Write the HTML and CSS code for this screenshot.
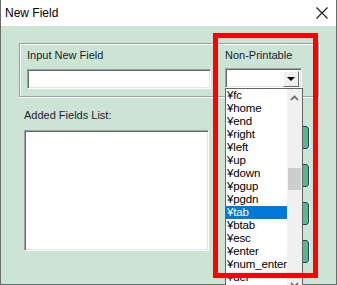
FILE: index.html
```html
<!DOCTYPE html>
<html lang="en">
<head>
    <meta charset="UTF-8">
    <meta name="viewport" content="width=device-width, initial-scale=1.0">
    <title>New Field</title>
    <link rel="stylesheet" href="styles.css">
</head>
<body>
    <div class="window">
        <div class="titlebar">
            <span class="title">New Field</span>
            <svg class="close" width="12" height="12" viewBox="0 0 12 12">
                <path d="M0.5 0.5 L11.5 11.5 M11.5 0.5 L0.5 11.5" stroke="#1a1a1a" stroke-width="1.1" fill="none"/>
            </svg>
        </div>

        <div class="client">
            <div class="group">
                <div class="col-input">
                    <div class="label">Input New Field</div>
                    <div class="textbox"></div>
                </div>
                <div class="col-combo">
                    <div class="label">Non-Printable</div>
                    <div class="combo">
                        <span class="combo-btn"><span class="arrow"></span></span>
                        <div class="dropdown">
                            <ul class="items">
                                <li>¥fc</li>
                                <li>¥home</li>
                                <li>¥end</li>
                                <li>¥right</li>
                                <li>¥left</li>
                                <li>¥up</li>
                                <li>¥down</li>
                                <li>¥pgup</li>
                                <li>¥pgdn</li>
                                <li class="selected">¥tab</li>
                                <li>¥btab</li>
                                <li>¥esc</li>
                                <li>¥enter</li>
                                <li>¥num_enter</li>
                                <li>¥del</li>
                            </ul>
                            <div class="scrollbar">
                                <span class="scroll-btn">
                                    <svg width="9" height="6" viewBox="0 0 9 6"><polyline points="1,5 4.5,1.5 8,5" stroke="#606060" stroke-width="1.6" fill="none"/></svg>
                                </span>
                                <span class="thumb"></span>
                                <span class="scroll-btn down">
                                    <svg width="9" height="6" viewBox="0 0 9 6"><polyline points="1,1 4.5,4.5 8,1" stroke="#606060" stroke-width="1.6" fill="none"/></svg>
                                </span>
                            </div>
                        </div>
                    </div>
                </div>
            </div>

            <div class="lower">
                <div class="list-col">
                    <div class="label">Added Fields List:</div>
                    <div class="listbox"></div>
                </div>
                <div class="buttons">
                    <button class="action"></button>
                    <button class="action"></button>
                    <button class="action"></button>
                    <button class="action"></button>
                </div>
            </div>
        </div>

        <div class="mark"></div>
    </div>
</body>
</html>
```

FILE: styles.css
```css
html {
    overflow: hidden;
}

body {
    margin: 0;
    font-family: "Liberation Sans", Arial, sans-serif;
    color: #000;
}

.window {
    position: relative;
    width: 337px;
    height: 285px;
    box-sizing: border-box;
    border: 1px solid #6b6b6b;
    border-top: none;
    background-color: #cce4d4;
}

.titlebar {
    height: 26px;
    background-color: #fff;
    display: flex;
    align-items: center;
    justify-content: space-between;
    padding: 0 8px 0 4px;
}

.title {
    font-size: 12px;
    color: #000;
}

.close {
    display: block;
}

.label {
    font-size: 11px;
    line-height: 13px;
    color: #1b1b2e;
    white-space: nowrap;
}

/* etched group box */
.group {
    margin: 17px 17px 0 18px;
    height: 54px;
    box-sizing: border-box;
    border: 1px solid #a0a0a0;
    box-shadow: inset 1px 1px #fff, 1px 1px #fff;
    padding: 5px 0 0 7px;
    display: flex;
    gap: 14px;
}

.col-input {
    width: 184px;
}

.textbox {
    margin-top: 7px;
    height: 20px;
    box-sizing: border-box;
    background-color: #fff;
    border: 1px solid;
    border-color: #a0a0a0 #fff #fff #a0a0a0;
    box-shadow: inset 1px 1px #696969, inset -1px -1px #e3e3e3;
}

.col-combo {
    width: 78px;
}

.combo {
    position: relative;
    margin-top: 6px;
    width: 77px;
    height: 20px;
    box-sizing: border-box;
    background-color: #fff;
    border: 1px solid;
    border-color: #a0a0a0 #fff #fff #a0a0a0;
    box-shadow: inset 1px 1px #696969, inset -1px -1px #e3e3e3;
    display: flex;
    justify-content: flex-end;
    padding: 2px 2px 2px 0;
}

.combo-btn {
    width: 16px;
    height: 16px;
    box-sizing: border-box;
    background-color: #f0f0f0;
    border: 1px solid;
    border-color: #fff #696969 #696969 #fff;
    display: flex;
    align-items: center;
    justify-content: center;
}

.arrow {
    width: 0;
    height: 0;
    border-left: 4px solid transparent;
    border-right: 4px solid transparent;
    border-top: 4px solid #000;
}

/* open drop-down list */
.dropdown {
    position: absolute;
    top: 19px;
    left: -1px;
    z-index: 2;
    width: 78px;
    height: 206px;
    box-sizing: border-box;
    background-color: #fff;
    border: 1px solid #646464;
    display: flex;
}

.items {
    list-style: none;
    margin: 0;
    padding: 0;
    flex: 1;
}

.items li {
    height: 13px;
    line-height: 13px;
    font-size: 11.5px;
    letter-spacing: -0.15px;
    padding-left: 1px;
    white-space: nowrap;
}

.items .selected {
    background-color: #0078d7;
    color: #fff;
}

.scrollbar {
    width: 16px;
    background-color: #f0f0f0;
    display: flex;
    flex-direction: column;
}

.scroll-btn {
    height: 17px;
    display: flex;
    align-items: center;
    justify-content: center;
}

.scroll-btn svg {
    display: block;
}

.thumb {
    margin: 62px 1px 0;
    height: 22px;
    background-color: #cdcdcd;
}

.scroll-btn.down {
    margin-top: auto;
}

/* lower part */
.lower {
    margin: 12px 0 0 23px;
    display: flex;
}

.list-col {
    width: 185px;
}

.listbox {
    margin-top: 8px;
    height: 121px;
    box-sizing: border-box;
    background-color: #fff;
    border: 1px solid;
    border-color: #a0a0a0 #fff #fff #a0a0a0;
    box-shadow: inset 1px 1px #696969, inset -1px -1px #e3e3e3;
}

.buttons {
    margin-left: 21px;
    padding-top: 17px;
    display: flex;
    flex-direction: column;
    gap: 15px;
}

.action {
    width: 79px;
    height: 23px;
    padding: 0;
    background-color: #5cb88b;
    border: 1px solid #1c3d70;
    border-radius: 3px;
    box-shadow: 1px 0 #fff;
}

/* red highlight frame drawn over the dialog */
.mark {
    position: absolute;
    left: 212px;
    top: 33px;
    z-index: 3;
    width: 105px;
    height: 245px;
    box-sizing: border-box;
    border: 5px solid #ff0000;
}
```
